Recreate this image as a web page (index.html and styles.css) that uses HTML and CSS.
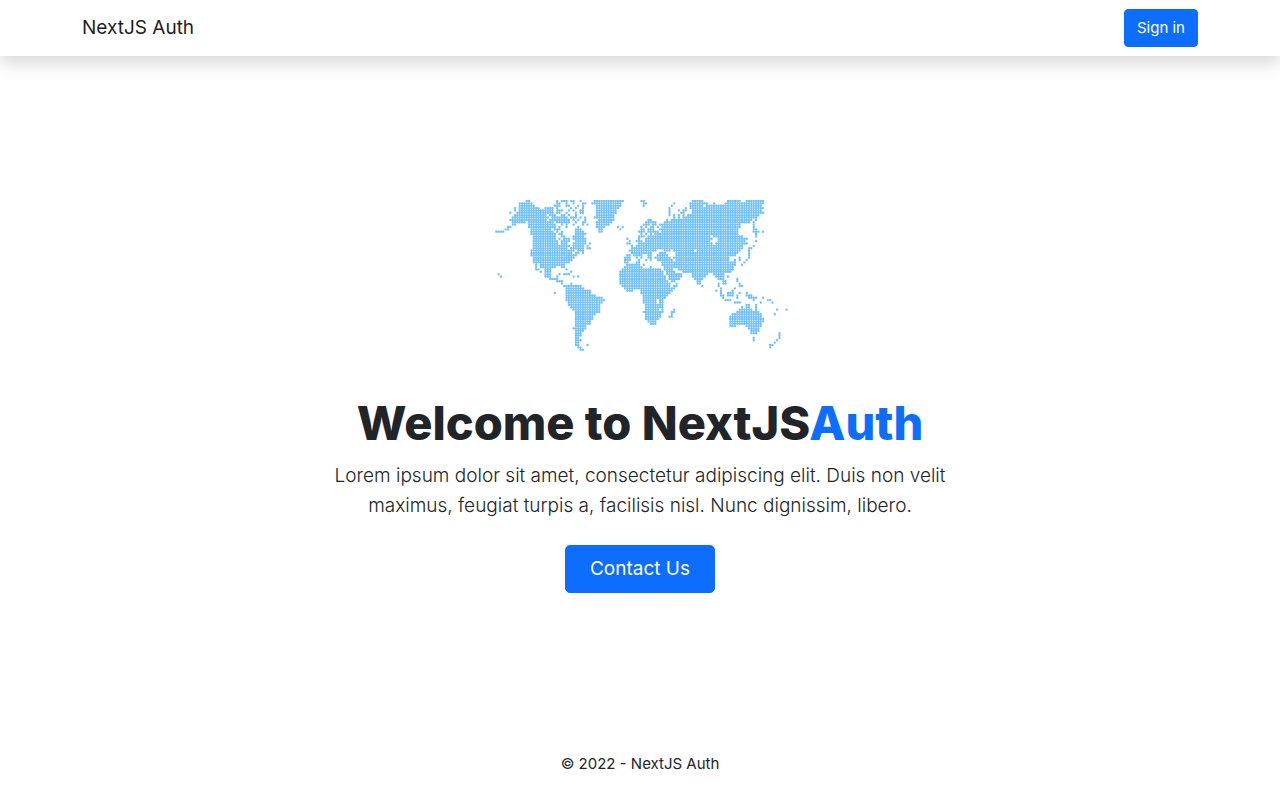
FILE: index.html
```html
<!DOCTYPE html>
<html lang="en">
<head>
<meta charset="utf-8">
<meta name="viewport" content="width=device-width, initial-scale=1">
<title>NextJS Auth</title>
<link rel="stylesheet" href="styles.css">
</head>
<body>
<header class="navbar">
  <nav class="container">
    <a class="brand" href="#">NextJS Auth</a>
    <button class="btn" type="button">Sign in</button>
  </nav>
</header>
<main class="hero">
  <svg class="map" viewBox="0 12 900 480" role="img" aria-label="World map"><path id="dots" transform="translate(19 15) scale(7.02 7.08)"/></svg>
  <h1 class="title">Welcome to NextJS<span class="accent">Auth</span></h1>
  <p class="lead">Lorem ipsum dolor sit amet, consectetur adipiscing elit. Duis non velit maximus, feugiat turpis a, facilisis nisl. Nunc dignissim, libero.</p>
  <button class="btn btn-large" type="button">Contact Us</button>
</main>
<footer class="footer">© 2022 - NextJS Auth</footer>
<script src="map.js"></script>
</body>
</html>
```
FILE: styles.css
```css
* { box-sizing: border-box; }
body {
  margin: 0;
  min-height: 100vh;
  display: flex;
  flex-direction: column;
  background: #fff;
  color: #212529;
  font: 400 15px/24px Inter, "Liberation Sans", sans-serif;
}
.navbar {
  background: #fff;
  padding: 8px 0;
  box-shadow: 0 8px 16px rgba(0, 0, 0, .15);
}
.container {
  max-width: 1140px;
  min-height: 40px;
  margin: 0 auto;
  padding: 0 12px;
  display: flex;
  align-items: center;
  justify-content: space-between;
}
.brand {
  color: rgba(0, 0, 0, .9);
  font-size: 19px;
  line-height: 30px;
  text-decoration: none;
}
.btn {
  font: inherit;
  color: #fff;
  background: #0d6efd;
  border: 1px solid #0d6efd;
  border-radius: 4px;
  padding: 6px 12px;
  cursor: pointer;
}
.btn-large {
  font-size: 19px;
  line-height: 30px;
  padding: 8px 24px;
  border-radius: 5px;
}
.hero {
  flex: 1;
  display: flex;
  flex-direction: column;
  align-items: center;
  justify-content: center;
  padding: 0 12px;
  text-align: center;
}
.map {
  width: 300px;
  height: 160px;
  margin-bottom: 35px;
}
.map path {
  fill: none;
  stroke: #6cbeff;
  stroke-width: 1;
  stroke-linecap: round;
  stroke-dasharray: 0 1;
}
.title {
  margin: 0 0 10px;
  font-size: 47px;
  line-height: 56px;
  font-weight: 800;
}
.accent { color: #0d6efd; }
.lead {
  max-width: 636px;
  margin: 0 0 24px;
  font-size: 19px;
  line-height: 30px;
  font-weight: 300;
}
.footer {
  padding: 16px 12px 24px;
  text-align: center;
}
```
FILE: map.js
```js
// Each entry is one row of dots; "a-b" is a run of columns.
const rows = [
  "13-14 26 28-30 32-33 36 42-54 62-63 84-88 99-104 107-114",
  "10-15 26-27 30 33 37-38 41-53 63-64 76 83-89 90 93 98-114",
  "10-16 25-27 30-31 35 37 43-53 63 75 83-88 90-113",
  "8 10-18 21-24 26 32 34 37 43-52 74 81 83-114",
  "8 10-24 26-28 31 33 36-37 43-51 74 78 80-81 84-113",
  "6 9-24 26-27 30 34 36-37 43-51 74 79-80 84-114",
  "8-21 23-25 28-29 31 34 43-50 74 76 78 80 82-112",
  "7-22 24-30 32-34 36 38 42-50 76 78 80-111",
  "6-21 23-31 33 35 38 44-50 65-66 73 75-109 111",
  "7-12 14-24 26-31 34 37-38 43-49 64-68 72-108 110",
  "7-8 14-25 28 30 33 37 39 43-48 63-65 67-68 70-104 110",
  "5-6 14-25 27 30 35 43-46 52 54 62 64 66-67 69 71-104 110",
  "4-5 15-23 25-27 34-36 44-45 53 62-63 65-67 70-103 110-111",
  "0-3 15-24 26 28 34-37 44-45 61-63 65-69 71-103 110-112 114",
  "15-25 27-28 34-38 62 64 66 68-103 111",
  "16-25 28-29 33-37 61-63 65-91 93-105 111",
  "16-25 27 29-31 33-38 56 61 64-92 95-107",
  "16-26 28-31 34-38 57 60-62 64-91 95-106 111",
  "16-26 28-30 33-38 40 56-57 61-92 94-107",
  "16-31 33-37 39 58 60-105 110",
  "16-30 32-37 39-40 58-105 108-109",
  "15-33 35-37 57-68 72-74 76-84 86-104 108",
  "15-32 34-35 37 58-66 70-72 77-103 108",
  "15-34 56-57 59-62 65-66 69-73 77-102 108",
  "16-33 55-57 60 62 65-66 68-74 76-99 104 108",
  "16-32 55-57 61 64 66 69-75 77-99 102 104 107",
  "16-31 55-56 60-61 71-102 106",
  "17 19-29 56-61 63 71-102 105",
  "17 19-25 28-29 55-62 66 72-101",
  "17-18 21-23 30 54-70 72-75 78-101",
  "19 21-23 32 53-71 73-76 80-100",
  "1 21-23 27 29-31 53-71 73-79 84-90 93-97",
  "2 21-23 26 33 35 53-72 74-79 84-89 94-97 99",
  "23-26 53-72 74-78 85-88 95-97 103",
  "26-28 53-73 75-76 86-87 97-98 103",
  "28 32 53-74 77 86-87 95 97-98 104",
  "29-36 54-74 76-77 88 95 104-105",
  "30-37 55-76 96 102",
  "30-40 56-58 62-75 94 96 101",
  "25 30-40 62-74 96 99-101 104 107",
  "30-42 63-73 96-97 99-101 103 107-109",
  "30-45 63-72 97 103 108-111 114",
  "30-46 63-68 70-71 98-100 110 116-117",
  "31-45 63-68 70-71 102-104 113 118",
  "31-44 64-71 107-108 111",
  "32-44 64-71 105 107-108 111",
  "33-44 64-69 71 76 104-109 111 120 124",
  "34-44 63-71 75-76 103-112",
  "34-42 64-70 75 101-113 119",
  "34-41 64-70 74-75 100-113",
  "34-41 64-69 100-114",
  "34-40 65-68 100-114",
  "34-40 66-68 100-113",
  "34-38 100-102 107-113",
  "33-38 108-112",
  "34-37 109-112",
  "34-36 109-111 121",
  "34-36 121",
  "34-35 110 121",
  "34-36 110 120",
  "34-35 119",
  "34-35 39 117-118",
  "35-36 117",
  "36-37"
];

document.getElementById("dots").setAttribute("d", rows.map((row, y) =>
  row.split(" ").map(run => {
    const [start, end = start] = run.split("-").map(Number);
    return `M${start} ${y}h${end - start + 0.01}`;
  }).join("")
).join(""));
```
